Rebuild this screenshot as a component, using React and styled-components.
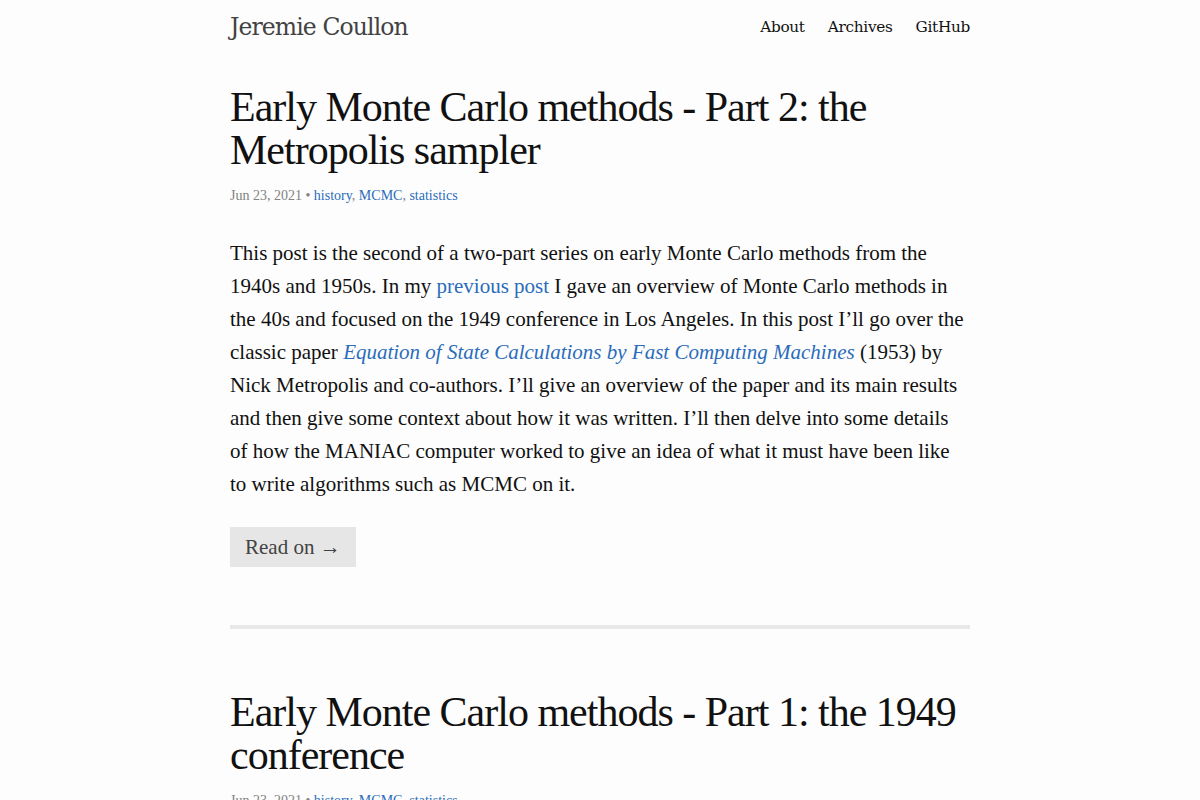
import React from 'react'
import styled, { createGlobalStyle } from 'styled-components';

const GlobalStyle = createGlobalStyle`
  body {
    margin: 0;
    background: #fdfdfd;
    color: #111;
    font-family: "Liberation Serif", "Times New Roman", serif;
  }
`;

const Page = styled.div`
  width: 740px;
  margin: 0 auto;
`;

const Header = styled.header`
  height: 54px;
  display: flex;
  align-items: center;
  justify-content: space-between;
`;

const SiteTitle = styled.a`
  font-family: "DejaVu Serif", serif;
  font-size: 23.5px;
  letter-spacing: -0.9px;
  color: #424242;
  text-decoration: none;
`;

const Nav = styled.nav`
  display: flex;
  gap: 23px;
`;

const NavLink = styled.a`
  font-family: "DejaVu Serif", serif;
  font-size: 15.3px;
  letter-spacing: -0.3px;
  color: #111;
  text-decoration: none;
`;

const Post = styled.article`
  padding-top: 32px;
`;

const PostTitle = styled.h1`
  margin: 0;
  font-size: 42px;
  font-weight: 400;
  line-height: 43px;
  letter-spacing: -1px;
`;

const Meta = styled.div`
  margin-top: 16px;
  font-size: 14px;
  color: #828282;
`;

const Tag = styled.a`
  color: #2a6cbb;
  text-decoration: none;
`;

const Excerpt = styled.p`
  margin: 33px 0 0;
  font-size: 21px;
  line-height: 33px;
`;

const Link = styled.a`
  color: #2a6cbb;
  text-decoration: none;
  font-style: ${(props) => (props.$italic ? 'italic' : 'normal')};
`;

const ReadOn = styled.a`
  display: inline-block;
  margin-top: 26px;
  padding: 4px 15px;
  height: 32px;
  line-height: 32px;
  background: #e6e6e6;
  color: #424242;
  font-size: 21px;
  text-decoration: none;
`;

const Divider = styled.hr`
  margin: 58px 0 30px;
  border: none;
  height: 4px;
  background: #e8e8e8;
`;

const tags = ['history', 'MCMC', 'statistics'];

const PostMeta = () => (
  <Meta>
    Jun 23, 2021 •{' '}
    {tags.map((t, i) => (
      <React.Fragment key={t}>
        <Tag href="#">{t}</Tag>
        {i < tags.length - 1 ? ', ' : ''}
      </React.Fragment>
    ))}
  </Meta>
);

const App = () => {
  return (
    <>
      <GlobalStyle />
      <Page>
        <Header>
          <SiteTitle href="#">Jeremie Coullon</SiteTitle>
          <Nav>
            <NavLink href="#">About</NavLink>
            <NavLink href="#">Archives</NavLink>
            <NavLink href="#">GitHub</NavLink>
          </Nav>
        </Header>
        <Post>
          <PostTitle>Early Monte Carlo methods - Part 2: the Metropolis sampler</PostTitle>
          <PostMeta />
          <Excerpt>
            This post is the second of a two-part series on early Monte Carlo methods from the
            1940s and 1950s. In my <Link href="#">previous post</Link> I gave an overview of Monte
            Carlo methods in the 40s and focused on the 1949 conference in Los Angeles. In this
            post I’ll go over the classic paper{' '}
            <Link href="#" $italic>Equation of State Calculations by Fast Computing Machines</Link>{' '}
            (1953) by Nick Metropolis and co-authors. I’ll give an overview of the paper and its
            main results and then give some context about how it was written. I’ll then delve into
            some details of how the MANIAC computer worked to give an idea of what it must have been
            like to write algorithms such as MCMC on it.
          </Excerpt>
          <ReadOn href="#">Read on →</ReadOn>
        </Post>
        <Divider />
        <Post>
          <PostTitle>Early Monte Carlo methods - Part 1: the 1949 conference</PostTitle>
          <PostMeta />
        </Post>
      </Page>
    </>
  )
}

export default App
